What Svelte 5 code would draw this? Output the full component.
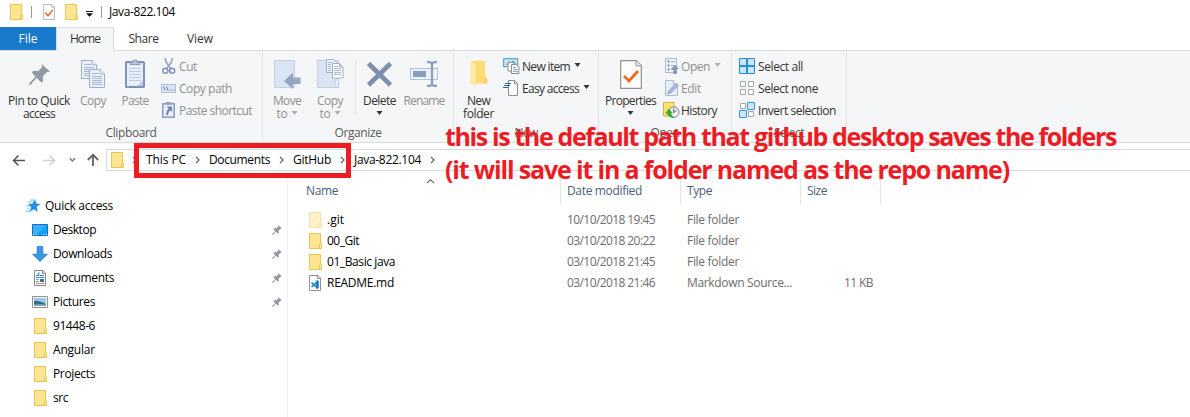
<script>
  // Tunes letter spacing so a label fills its designed width.
  function fit(node, width) {
    const apply = (w) => {
      node.style.letterSpacing = '0px';
      const natural = node.getBoundingClientRect().width;
      node.style.letterSpacing = `${(w - natural) / node.textContent.length}px`;
    };
    apply(width);
    return { update: apply };
  }

  const tabs = [
    { name: 'File', w: 19, kind: 'file' },
    { name: 'Home', w: 30, kind: 'home' },
    { name: 'Share', w: 30, kind: 'share' },
    { name: 'View', w: 26, kind: 'view' }
  ];

  const crumbs = [
    ['This PC', 40],
    ['Documents', 61],
    ['GitHub', 38],
    ['Java-822.104', 67]
  ];

  const places = [
    { name: 'Desktop', w: 43, icon: 'desktop', pinned: true },
    { name: 'Downloads', w: 59, icon: 'download', pinned: true },
    { name: 'Documents', w: 61, icon: 'document', pinned: true },
    { name: 'Pictures', w: 42, icon: 'picture', pinned: true },
    { name: '91448-6', w: 42, icon: 'folder' },
    { name: 'Angular', w: 42, icon: 'folder' },
    { name: 'Projects', w: 42, icon: 'folder' },
    { name: 'src', w: 15, icon: 'folder' }
  ];

  const files = [
    { name: '.git', w: 17, date: '10/10/2018 19:45', type: 'File folder', tw: 52, icon: 'folder', faded: true },
    { name: '00_Git', w: 32, date: '03/10/2018 20:22', type: 'File folder', tw: 52, icon: 'folder' },
    { name: '01_Basic java', w: 68, date: '03/10/2018 21:45', type: 'File folder', tw: 52, icon: 'folder' },
    { name: 'README.md', w: 67, date: '03/10/2018 21:46', type: 'Markdown Source...', tw: 105, icon: 'code', size: '11 KB' }
  ];
</script>

{#snippet t(text, w)}<span class="t" use:fit={w}>{text}</span>{/snippet}

{#snippet caret()}<svg class="caret" width="7" height="4" viewBox="0 0 7 4"><path d="M0.5 0h6L3.5 4z" fill="currentColor" /></svg>{/snippet}

{#snippet chevron()}<svg class="chev" width="5" height="8" viewBox="0 0 5 8"><path d="M1 1l3 3-3 3" fill="none" stroke="#6b6b6b" stroke-width="1.3" /></svg>{/snippet}

{#snippet folder()}
  <svg width="14" height="16" viewBox="0 0 14 16">
    <path d="M.5.5h11v9.5l1 .8v4.7H.5z" fill="#ffe491" stroke="#e9c552" />
    <path d="M10.5 15.5v-4l1-1.2 1 .7v4.5z" fill="#ffeaa8" stroke="#e9c552" />
  </svg>
{/snippet}

{#snippet pin(size)}
  <svg width={size} height={size} viewBox="0 0 20 20">
    <path d="M12 0l8 7.2-2.8.4-4.1 4.1.4 4.7-1.8 1.1-4.4-4.4L1.5 19.8 0 20l.2-1.5 6-6.7L2.6 8.2l1.3-1.6 4.9.1 3.8-3.8z" fill="#919aa3" />
  </svg>
{/snippet}

{#snippet page(dim)}
  <path d="M.5.5h10.7l4.3 4.3v13.7H.5z" fill={dim ? '#e9eff9' : '#fff'} stroke="#a1b0c9" />
  <path d="M11.2.5v4.3h4.3" fill="#fff" stroke="#a1b0c9" />
  <path d="M3 4.5h7M3 7.5h10M3 9.5h10M3 11.5h10M3 13.5h10M3 15.5h10" stroke="#a9b9d3" />
{/snippet}

{#snippet checkPage(w, h)}
  <svg width={w} height={h} viewBox="0 0 22 29" preserveAspectRatio="none">
    <path d="M.7.7h15.6l5 5v22.6H.7z" fill="#fff" stroke="#909090" stroke-width="1.2" />
    <path d="M16 .7v5.2h5.3" fill="#f2f2f2" stroke="#909090" />
    <path d="M4 16l5 5L18 11" fill="none" stroke="#f26522" stroke-width="2.7" />
  </svg>
{/snippet}

<div class="window">
  <header class="title">
    <span class="qf">{@render folder()}</span>
    <i class="bar"></i>
    <span class="qc">{@render checkPage(12, 16)}</span>
    <span class="qn">{@render folder()}</span>
    <svg class="menu" width="7" height="6" viewBox="0 0 7 6"><path d="M0 0h7v1H0zM0 2.2h7L3.5 5.8z" fill="#111" /></svg>
    <i class="bar second"></i>
    {@render t('Java-822.104', 66)}
  </header>

  <nav class="tabs">
    {#each tabs as tab}
      <div class="tab {tab.kind}">{@render t(tab.name, tab.w)}</div>
    {/each}
  </nav>

  <section class="ribbon">
    <div class="group clipboard">
      <div class="tools">
        <div class="big pinb">
          <div class="ico">{@render pin(21)}</div>
          {@render t('Pin to Quick', 62)}{@render t('access', 32)}
        </div>
        <div class="big copyb dim">
          <div class="ico">
            <svg width="25" height="29" viewBox="0 0 25 29"><g>{@render page(true)}</g><g transform="translate(8 9)"><path d="M.5.5h10.7l4.3 4.3v14.2H.5z" fill="#fff" />{@render page(true)}</g></svg>
          </div>
          {@render t('Copy', 26)}
        </div>
        <div class="big pasteb dim">
          <div class="ico">
            <svg width="22" height="30" viewBox="0 0 22 30">
              <rect x="2" y="3" width="18" height="25" rx=".6" fill="#eaf0fa" stroke="#7f93b9" stroke-width="2" />
              <path d="M6 5.5v-2h3V1.2h4v2.3h3v2z" fill="#b8c4d6" stroke="#8b9bb9" />
              <path d="M5 9.5h12M5 12.5h12M5 15.5h12M5 18.5h12M5 21.5h12" stroke="#bccae2" />
              <path d="M13 27l6-5.5V27z" fill="#bccae2" />
            </svg>
          </div>
          {@render t('Paste', 27)}
        </div>
        <div class="smalls dim">
          <div class="small">
            <svg width="18" height="18" viewBox="0 0 18 18">
              <path d="M4 1l1.4 4.5 5 7M11.5 1l-1.4 4.5-5 7" fill="none" stroke="#9aa9c0" stroke-width="1.7" />
              <circle cx="4.4" cy="13.8" r="2.5" fill="none" stroke="#8497ba" stroke-width="1.6" />
              <circle cx="11.2" cy="13.8" r="2.5" fill="none" stroke="#8497ba" stroke-width="1.6" />
            </svg>
            {@render t('Cut', 18)}
          </div>
          <div class="small">
            <svg width="18" height="18" viewBox="0 0 18 18">
              <rect x=".5" y="5.5" width="14" height="8" fill="#dce6f4" stroke="#b0c0da" />
              <path d="M2.5 7.5l1.5 4M5.5 7.5l1.5 4M8.5 11h1M10.5 11h1M12.5 11h1" stroke="#6b7f9f" />
            </svg>
            {@render t('Copy path', 53)}
          </div>
          <div class="small">
            <svg width="18" height="18" viewBox="0 0 18 18">
              <rect x="1.8" y="2.8" width="11.4" height="13.4" fill="#eaf0fa" stroke="#8c9fc3" stroke-width="1.6" />
              <path d="M5 3V1.5h5V3z" fill="#a5b4cd" stroke="#8c9fc3" />
              <path d="M5.5 5.5h5.5V11L9.3 9.3Q7 11 7 14H5q0-4 2.6-6.4z" fill="#6e83ac" />
            </svg>
            {@render t('Paste shortcut', 73)}
          </div>
        </div>
      </div>
      <div class="caption">{@render t('Clipboard', 51)}</div>
    </div>

    <div class="group organize">
      <div class="tools">
        <div class="big moveb dim">
          <div class="ico">
            <svg width="28" height="30" viewBox="0 0 28 30">
              <path d="M1.5 1.5h20v27h-20z" fill="#dae4f3" stroke="#c2cfe4" /><path d="M18 28v-7l3.5-2v9z" fill="#e8effa" stroke="#c2cfe4" />
              <path d="M11 22l9-8.5v5h7.5v6.5H20v5z" fill="#95a6c5" />
            </svg>
          </div>
          {@render t('Move', 28)}
          <span class="line">{@render t('to', 11)}{@render caret()}</span>
        </div>
        <div class="big copyto dim">
          <div class="ico">
            <svg width="28" height="30" viewBox="0 0 28 30">
              <path d="M1.5 1.5h21v27h-21z" fill="#dae4f3" stroke="#c2cfe4" /><path d="M19 28v-7l3.5-2v9z" fill="#e8effa" stroke="#c2cfe4" />
              <path d="M10.5.5h7l3 3v10h-10z" fill="#eef3fb" stroke="#a1b0c9" /><path d="M12 3.5h5M12 5.5h3M12 7.5h3M12 9.5h3M12 11.5h3" stroke="#a9b9d3" />
              <path d="M16.5 4.5h7l3.5 3.5v11H16.5z" fill="#fff" stroke="#a1b0c9" /><path d="M23.5 4.5V8H27" fill="none" stroke="#a1b0c9" /><path d="M18 7.5h4M18 9.5h7M18 11.5h7M18 13.5h7M18 15.5h7" stroke="#a9b9d3" />
            </svg>
          </div>
          {@render t('Copy', 26)}
          <span class="line">{@render t('to', 11)}{@render caret()}</span>
        </div>
        <i class="split"></i>
        <div class="big deleteb">
          <div class="ico"><svg width="28" height="28" viewBox="0 0 28 28"><path d="M2.5 3.5l22 21.5M24.5 3.5L2.5 25" stroke="#7e8fae" stroke-width="4.6" /></svg></div>
          {@render t('Delete', 33)}
          <span class="line">{@render caret()}</span>
        </div>
        <div class="big renameb dim">
          <div class="ico">
            <svg width="28" height="28" viewBox="0 0 28 28">
              <rect x=".5" y="8.5" width="27" height="11" fill="#edf4fd" stroke="#b1c1db" /><rect x="3" y="11" width="13" height="6" fill="#8b9dbe" />
              <path d="M17 2.2h3.3l1.7 1.6 1.7-1.6H27M17 25.8h3.3l1.7-1.6 1.7 1.6H27M22 3v22" fill="none" stroke="#8c9ebc" stroke-width="2.3" />
            </svg>
          </div>
          {@render t('Rename', 41)}
        </div>
      </div>
      <div class="caption">{@render t('Organize', 47)}</div>
    </div>

    <div class="group new">
      <div class="tools">
        <div class="big newf">
          <div class="ico">
            <svg width="20" height="28" viewBox="0 0 20 28">
              <path d="M3 1h13v16l2 1.5v5H3z" fill="#ffdb73" /><path d="M1 1l6 3.5V27L1 23z" fill="#ffeaac" /><path d="M14.5 23.5v-5.5l1.5-1 2.5 2v4.5z" fill="#f8d06a" />
            </svg>
          </div>
          {@render t('New', 23)}{@render t('folder', 31)}
        </div>
        <div class="smalls">
          <div class="small">
            <svg width="18" height="18" viewBox="0 0 18 18">
              <rect x=".7" y="1.7" width="14" height="8" fill="#c6e7fa" stroke="#4b96bd" /><path d="M3 8l3-4 2 2 2-3 4 5z" fill="#64a6bb" />
              <path d="M5 5.5h5l2 2V14H5z" fill="#fff" stroke="#8e8e8e" /><path d="M8.5 7.5h5l2.5 2.5v6.5H8.5z" fill="#fff" stroke="#8e8e8e" /><path d="M10 10.5h3M10 12.5h5M10 14.5h5" stroke="#83a6cb" />
            </svg>
            {@render t('New item', 48)}{@render caret()}
          </div>
          <div class="small">
            <svg width="18" height="18" viewBox="0 0 18 18">
              <path d="M5.5 1.5h6l3 3v12h-9z" fill="#fff" stroke="#8e8e8e" /><path d="M11.5 1.5V5h3" fill="none" stroke="#8e8e8e" />
              <path d="M2 4.5h6M1 6.5h6M0 8.5h5" stroke="#2665a8" stroke-width="1.1" />
            </svg>
            {@render t('Easy access', 57)}{@render caret()}
          </div>
        </div>
      </div>
      <div class="caption">{@render t('New', 23)}</div>
    </div>

    <div class="group open">
      <div class="tools">
        <div class="big props">
          <div class="ico">{@render checkPage(22, 29)}</div>
          {@render t('Properties', 51)}
          <span class="line">{@render caret()}</span>
        </div>
        <div class="smalls">
          <div class="small dim">
            <svg width="17" height="18" viewBox="0 0 17 18">
              <rect x="2.5" y="1.5" width="11" height="14" fill="#edf2fb" stroke="#abbbd5" />
              <path d="M4.5 3.5h2v2h-2zM4.5 7.5h2v2h-2zM4.5 11.5h2v2h-2z" fill="#7b8eb3" /><path d="M8 4.5h4M8 8.5h4M8 12.5h4" stroke="#9aabc9" />
              <path d="M12 8l4 4h-2.3v5h-3.4v-5H8z" fill="#8496b9" />
            </svg>
            {@render t('Open', 29)}{@render caret()}
          </div>
          <div class="small dim">
            <svg width="17" height="18" viewBox="0 0 17 18">
              <path d="M2.5 1.5h8l4 4v11h-12z" fill="#e7eef9" stroke="#abbbd5" /><path d="M10.5 1.5v4h4" fill="#fff" stroke="#abbbd5" />
              <path d="M4.5 15l1-3 7.7-8 2.4 2.2-7.8 8z" fill="#a5b9d8" stroke="#8fa4c9" stroke-width=".7" />
            </svg>
            {@render t('Edit', 20)}
          </div>
          <div class="small">
            <svg width="17" height="18" viewBox="0 0 17 18">
              <path d="M.5 1.5H11V15H.5z" fill="#ffe26f" stroke="#d6b23d" />
              <circle cx="10.7" cy="11.2" r="5.3" fill="#edf0ef" stroke="#777f82" /><path d="M10.7 7.5v4L13.5 9.5" fill="none" stroke="#5c6569" />
              <path d="M11 16.5q-5.5.5-7-4H2l3.8-4.7 4.2 4.5H7.7q1 2.2 3.3 4.2z" fill="#36aa31" />
            </svg>
            {@render t('History', 36)}
          </div>
        </div>
      </div>
      <div class="caption">{@render t('Open', 29)}</div>
    </div>

    <div class="group select">
      <div class="tools">
        <div class="smalls">
          <div class="small">
            <svg width="16" height="16" viewBox="0 0 16 16"><path d="M.5.5h15v15H.5z" fill="#cae6fa" stroke="#2b8cda" /><path d="M0 8h16M8 0v16" stroke="#2b8cda" stroke-width="2" /></svg>
            {@render t('Select all', 45)}
          </div>
          <div class="small">
            <svg width="16" height="16" viewBox="0 0 16 16"><path d="M1.5 1.5h5v5h-5zM9.5 1.5h5v5h-5zM1.5 9.5h5v5h-5zM9.5 9.5h5v5h-5z" fill="#fff" stroke="#a7a7a7" /></svg>
            {@render t('Select none', 60)}
          </div>
          <div class="small">
            <svg width="16" height="16" viewBox="0 0 16 16"><path d="M1.5 1.5h5v5h-5zM9.5 9.5h5v5h-5z" fill="#fff" stroke="#a7a7a7" /><path d="M8.5.5h7v7h-7zM.5 8.5h7v7h-7z" fill="#cae6fa" stroke="#3996df" /></svg>
            {@render t('Invert selection', 78)}
          </div>
        </div>
      </div>
      <div class="caption">{@render t('Select', 30)}</div>
    </div>
  </section>

  <div class="address">
    <svg class="nav" width="106" height="21" viewBox="0 0 106 21" fill="none">
      <path d="M13.5 11.5h11.5M18.5 6.5l-5 5 5 5" stroke="#555" stroke-width="1.5" />
      <path d="M43 11.5h11.5M49.5 6.5l5 5-5 5" stroke="#d0d0d0" stroke-width="1.5" />
      <path d="M69.8 9.3l2.6 2.6L75 9.3" stroke="#777" stroke-width="1.4" />
      <path d="M93 17V6M87.8 11L93 5.7l5.2 5.3" stroke="#606060" stroke-width="1.8" />
    </svg>
    <div class="path">
      {@render folder()}
      {@render chevron()}
      {#each crumbs as [name, w]}
        {@render t(name, w)}{@render chevron()}
      {/each}
    </div>
  </div>

  <main>
    <aside>
      <div class="quick">
        <svg width="15" height="14" viewBox="0 0 15 14"><path d="M2 3h5M0 7h5M1 10h3M0 12.5h4M4 1h4" stroke="#65bdf2" stroke-width=".9" /><path d="M9 0l1.2 4.5L14.5 5l-3.8 2.8 1.1 5.2-4-2.8L3.7 13l1.5-5L2 5.2l4.6-.6z" fill="#2390e0" /></svg>
        {@render t('Quick access', 68)}
      </div>
      {#each places as p}
        <div class="place">
          <span class="pi">
            {#if p.icon === 'folder'}
              {@render folder()}
            {:else if p.icon === 'desktop'}
              <svg width="16" height="12" viewBox="0 0 16 12"><path d="M.5.5h15v11H.5z" fill="#16a0fb" stroke="#0873c6" /><path d="M1 1h14L5 10H1z" fill="#3caefb" /><path d="M1 10.5h2M4 10.5h1M11 10.5h1M13 10.5h2" stroke="#e3f6ff" /></svg>
            {:else if p.icon === 'download'}
              <svg width="16" height="16" viewBox="0 0 16 16"><path d="M5.2.5h5.6v7.7h4.6L8 15.5.6 8.2h4.6z" fill="#3b96e6" stroke="#2476c3" stroke-width=".8" /></svg>
            {:else if p.icon === 'document'}
              <svg width="13" height="16" viewBox="0 0 13 16"><path d="M.5.5h8.7l2.3 2.3v12.7H.5z" fill="#fff" stroke="#898989" /><path d="M8.5.5V3.5h3" fill="#ddd" stroke="#898989" /><path d="M6 5.5h4M2 7.5h8M2 5.5h3" stroke="#318fd1" /><path d="M2 9.5h3M2 11.5h3M2 13.5h8" stroke="#9c9c9c" /><path d="M6 9h4v3H6z" fill="#3c7390" /><path d="M3 6l2-3.6V6" fill="none" stroke="#318fd1" stroke-width=".8" /></svg>
            {:else}
              <svg width="16" height="12" viewBox="0 0 16 12"><path d="M.5.5h15v11H.5z" fill="#fff" stroke="#929292" /><path d="M2 2h12v8H2z" fill="#9bc8f1" /><path d="M2 5q4-1 12 3v2H2z" fill="#347082" /><path d="M2 8.5l6-.3 6 .3V10H2z" fill="#85a9bf" /></svg>
            {/if}
          </span>
          {@render t(p.name, p.w)}
          {#if p.pinned}<span class="pinned">{@render pin(10)}</span>{/if}
        </div>
      {/each}
    </aside>

    <section class="listing">
      <div class="row head">
        <span class="hc name">{@render t('Name', 32)}<svg class="sort" width="9" height="5" viewBox="0 0 9 5"><path d="M.8 4.2L4.5.8l3.7 3.4" fill="none" stroke="#666" stroke-width="1.1" /></svg></span>
        <span class="hc">{@render t('Date modified', 75)}</span>
        <span class="hc">{@render t('Type', 25)}</span>
        <span class="hc">{@render t('Size', 20)}</span>
      </div>
      {#each files as f}
        <div class="row">
          <span class="fname">
            <span class="fi" class:faded={f.faded}>
              {#if f.icon === 'folder'}
                {@render folder()}
              {:else}
                <svg width="13" height="16" viewBox="0 0 13 16"><path d="M.5.5h8.7l2.3 2.3v12.7H.5z" fill="#fff" stroke="#919191" /><path d="M8.5.5V3.5h3" fill="#ddd" stroke="#919191" /><path d="M2.5 7.5l5.5 5V7L2.5 12" fill="none" stroke="#167ac5" stroke-width="1.5" /><path d="M7.5 5l2.3 1v7l-2.3 1z" fill="#167ac5" /></svg>
              {/if}
            </span>
            {@render t(f.name, f.w)}
          </span>
          <span class="cell">{@render t(f.date, 88)}</span>
          <span class="cell">{@render t(f.type, f.tw)}</span>
          <span class="cell size">{#if f.size}{@render t(f.size, 29)}{/if}</span>
        </div>
      {/each}
    </section>
  </main>

  <div class="frame"></div>
  <div class="note">
    <div>{@render t('this is the default path that github desktop saves the folders', 671)}</div>
    <div>{@render t('(it will save it in a folder named as the repo name)', 564)}</div>
  </div>
</div>

<style>
  :global(body) { margin: 0; background: #fff; }
  .window { position: relative; width: 1190px; height: 417px; overflow: hidden; background: #fff; font: 12px/14px "Open Sans", "Noto Sans", sans-serif; color: #000; }
  .window * { box-sizing: border-box; }
  svg { display: block; flex: none; }
  .t { display: inline-block; flex: none; white-space: pre; }

  .title { height: 27px; display: flex; align-items: center; padding: 0 0 4px 10px; }
  .bar { width: 1px; height: 12px; background: #999; margin-left: 7px; }
  .qc { margin-left: 11px; }
  .qn { margin-left: 10px; }
  .menu { margin: 4px 0 0 7px; }
  .bar.second { margin: 0 7px 0 8px; }

  .tabs { height: 24px; display: flex; position: relative; border-bottom: 1px solid #dadbdc; color: #333; }
  .tab { display: flex; justify-content: center; align-items: center; height: 23px; }
  .file { width: 56px; background: #1979ca; color: #fff; }
  .home { width: 58px; height: 24px; padding-bottom: 1px; background: #f5f6f7; border: 1px solid #dadbdc; border-bottom: 0; }
  .share { width: 59px; }
  .view { width: 54px; }

  .ribbon { height: 92px; display: flex; background: #f5f6f7; border-bottom: 1px solid #dadbdc; color: #333; }
  .group { display: flex; flex-direction: column; margin: 2px 0 3px; border-right: 1px solid #e1e2e3; }
  .tools { height: 74px; display: flex; }
  .caption { display: flex; justify-content: center; color: #5a5a5a; line-height: 13px; }
  .clipboard { width: 263px; }
  .organize { width: 191px; }
  .new { width: 145px; }
  .open { width: 133px; }
  .select { width: 115px; }
  .big { display: flex; flex-direction: column; align-items: center; line-height: 13px; }
  .ico { height: 41px; padding-top: 6px; display: flex; justify-content: center; flex: none; }
  .pinb .ico { padding-top: 11px; }
  .dim { color: #909090; }
  .line { display: flex; height: 13px; align-items: center; gap: 3px; }
  .caret { margin-top: 0; }
  .line .caret { margin-bottom: 1px; }
  .dim .caret { color: #b0b0b0; }
  .pinb { width: 78px; }
  .copyb { width: 30px; }
  .copyb .ico { padding-top: 7px; }
  .pasteb { width: 54px; }
  .moveb { width: 48px; }
  .copyto { width: 38px; }
  .split { width: 1px; height: 55px; background: #e1e2e3; margin: 7px 0 0 6px; }
  .deleteb { width: 47px; }
  .renameb { width: 42px; }
  .deleteb .ico, .renameb .ico, .newf .ico { padding-top: 7px; }
  .newf { width: 49px; }
  .props { width: 63px; }
  .props .ico { padding-top: 7px; }
  .smalls { padding-top: 2px; }
  .small { height: 22px; display: flex; align-items: center; }
  .small .t { padding-top: 1px; }
  .small .caret { margin: 0 0 2px 4px; }
  .open .smalls svg:first-child { margin-left: 1px; }
  .open .small .t { margin-left: 1px; }
  .clipboard .smalls { margin-left: -1px; }
  .new .small .t { margin-left: 1px; }
  .select .smalls { padding-left: 7px; }
  .select .small { gap: 3px; }

  .address { height: 36px; padding-top: 6px; display: flex; align-items: flex-start; }
  .path { flex: 1; height: 22px; border: 1px solid #d9d9d9; border-right: 0; padding-left: 4px; display: flex; align-items: center; }
  .path :global(.chev) { margin: 0 9px; }
  .path :global(svg:first-child) { margin-right: -2px; }

  main { display: flex; height: 239px; }
  aside { width: 288px; border-right: 1px solid #f1f1f1; padding-top: 15px; }
  .quick { height: 24px; display: flex; align-items: center; padding-left: 26px; gap: 4px; }
  .place { height: 24px; display: flex; align-items: center; padding-left: 32px; }
  .pi { width: 21px; display: flex; }
  .pi svg[width="13"] { margin-left: 2px; }
  .pi :global(svg[width="14"]) { margin-left: 2px; }
  .pinned { margin-left: auto; padding-right: 5px; }
  .listing { flex: 1; }
  .row { height: 21px; display: grid; grid-template-columns: 273px 120px 120px 80px; align-items: center; }
  .row.head { height: 25px; margin-bottom: 5px; color: #4c607a; align-items: stretch; }
  .hc { display: flex; align-items: center; padding: 0 0 1px 6px; border-right: 1px solid #e5e5e5; }
  .hc.name { padding-left: 18px; }
  .sort { margin: 0 0 19px 88px; }
  .fname { display: flex; align-items: center; padding-left: 21px; }
  .fi { width: 18px; display: flex; }
  .faded { opacity: .5; }
  .cell { padding-left: 6px; color: #6d6d6d; }
  .size { text-align: right; padding-right: 8px; }

  .frame { position: absolute; left: 134px; top: 143px; width: 217px; height: 35px; border: 5px solid #ed1c24; }
  .note { position: absolute; left: 445px; top: 120px; color: #ed1c24; font: 700 25px/33px "Open Sans", sans-serif; font-stretch: 90%; }
</style>
